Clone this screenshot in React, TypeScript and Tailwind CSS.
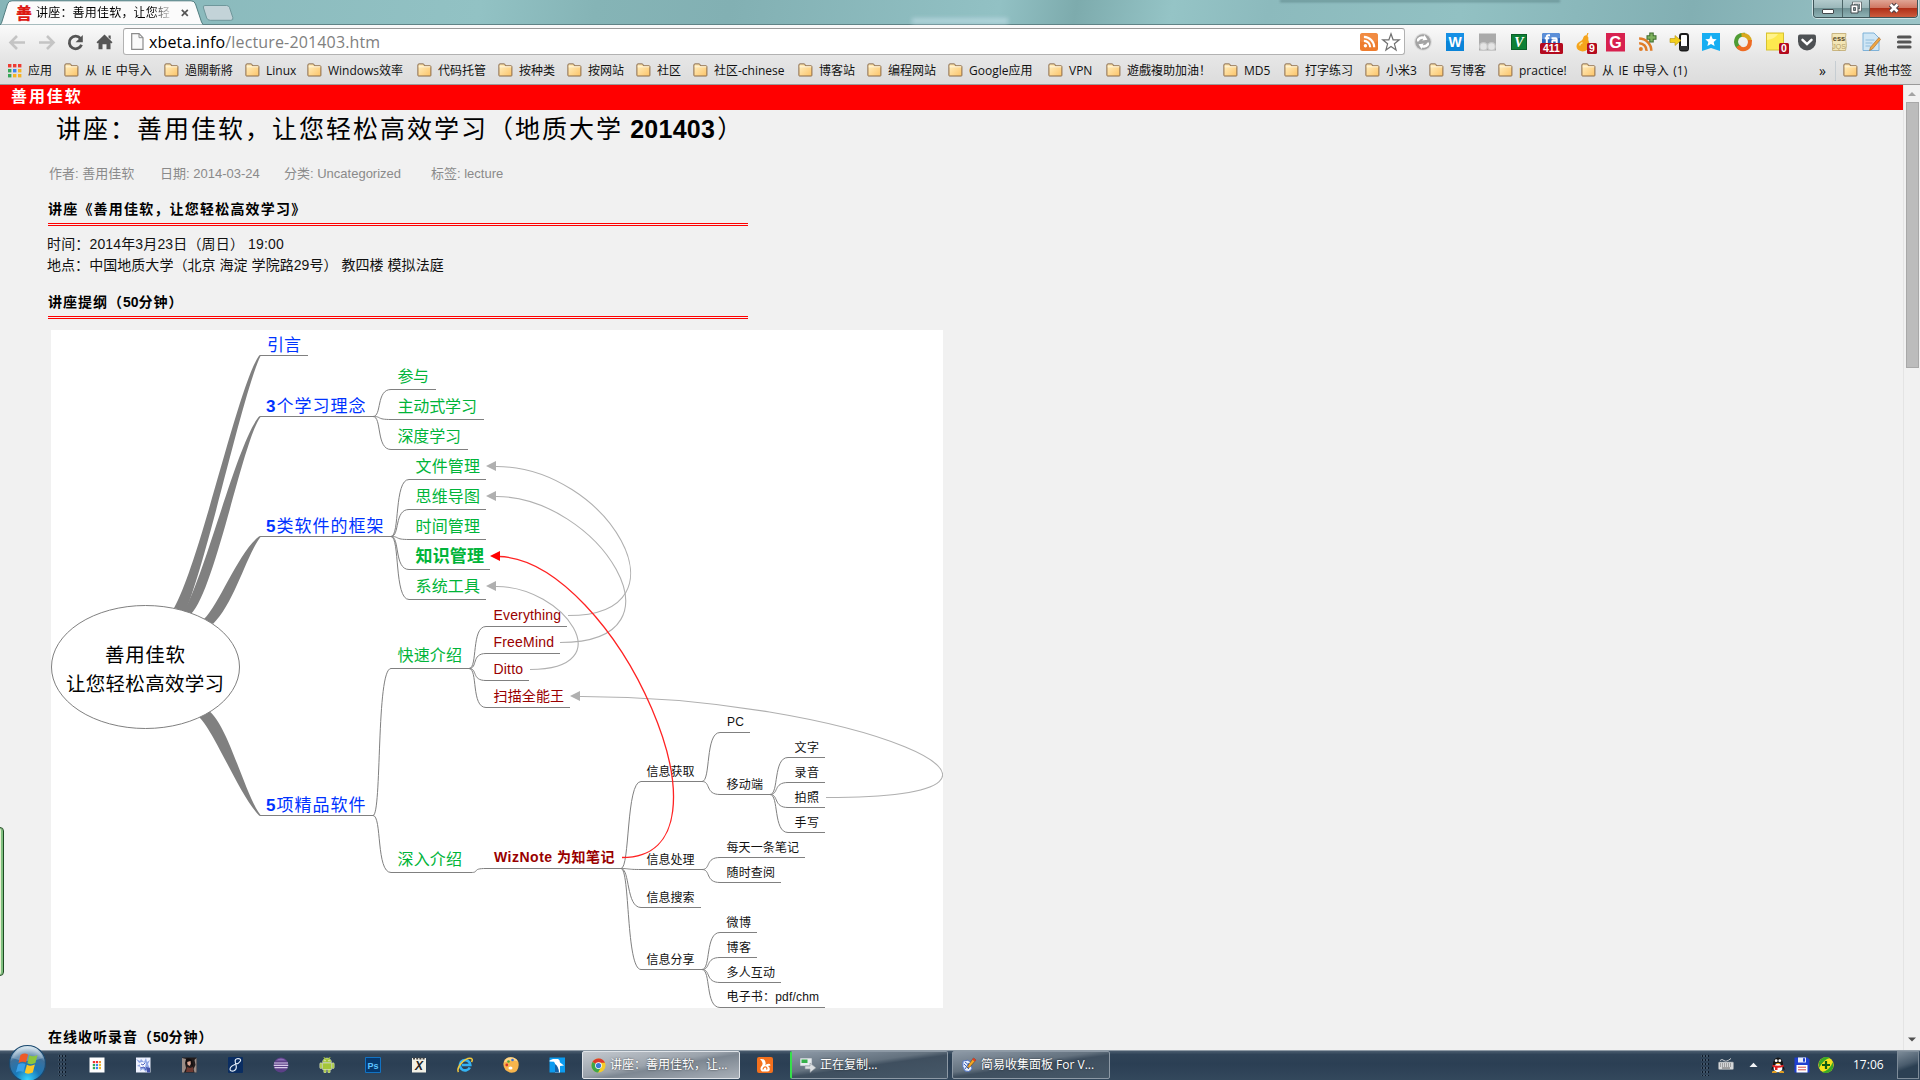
import React from "react";

const UI = "font-['Open_Sans','Noto_Sans_CJK_SC',sans-serif]";

/* ---------- small icons ---------- */

function Folder() {
  return (
    <svg className="h-4 w-4 shrink-0" viewBox="0 0 16 16">
      <defs>
        <linearGradient id="fold" x1="0" y1="0" x2="1" y2="1">
          <stop offset="0" stopColor="#fff0c4" />
          <stop offset="1" stopColor="#fcc468" />
        </linearGradient>
      </defs>
      <path d="M.9 12.400V2q0-1.100 1.100-1.100h4q1 0 1.200 1l.2.9H13q.9 0 .9.9v8.700q0 .6-.6.6H1.500q-.6 0-.6-.6z" fill="url(#fold)" stroke="#8a6a48" />
      <path d="M1.700 3.800h11.600" stroke="#fff6dc" />
    </svg>
  );
}

function Apps() {
  const c = ["#ee3b32", "#ee3b32", "#ee3b32", "#37a657", "#3c82f0", "#f5b324", "#37a657", "#f5b324", "#f5b324"];
  return (
    <svg className="h-[14px] w-[14px] shrink-0" viewBox="0 0 14 14">
      {c.map((f, i) => (
        <rect key={i} x={(i % 3) * 5} y={Math.floor(i / 3) * 5} width="3.4" height="3.4" fill={f} />
      ))}
    </svg>
  );
}

function Rss({ color = "#fff" }: { color?: string }) {
  return (
    <g fill="none" stroke={color} strokeWidth="2.2">
      <circle cx="5" cy="13.2" r="1.7" fill={color} stroke="none" />
      <path d="M3.5 8.2a6.3 6.3 0 0 1 6.3 6.5M3.5 4.2a10.4 10.4 0 0 1 10.3 10.5" />
    </g>
  );
}

const Badge = ({ x, w, t }: { x: number; w: number; t: string }) => (
  <g>
    <rect x={x} y="11" width={w} height="11" rx="1.5" fill="#b40a1e" />
    <text x={x + w / 2} y="20.3" fontSize="10.5" fontWeight="700" fill="#fff" textAnchor="middle" fontFamily="Liberation Sans">{t}</text>
  </g>
);

const extIcons: { c: number; g: React.ReactNode }[] = [
  { c: 1369, g: <g><rect x="1" y="1" width="18" height="18" rx="2.5" fill="#ee7d2f" /><rect x="1" y="1" width="18" height="9" rx="2.5" fill="#f39a55" opacity=".5" /><g transform="translate(1.4 .6)"><Rss /></g></g> },
  { c: 1391, g: <path d="M10 1.800l2.100 6h6.200l-4.900 4 1.700 6.200L10 14.400 4.900 18l1.700-6.200-4.900-4h6.200z" fill="#fff" stroke="#707070" strokeWidth="1.200" /> },
  { c: 1423, g: <g><circle cx="10" cy="10" r="9" fill="#dedede" /><circle cx="10" cy="10" r="7.800" fill="#a4a4a4" /><path d="M4 9.500V7q2.500-3.500 6.500-2.500l1-1.600 3 4.800-5.300.8 1-1.600Q7 6.500 5.500 9.500zM16 10.500V13q-2.500 3.500-6.500 2.500l-1 1.600-3-4.800 5.300-.8-1 1.600q3.200.4 4.700-2.600z" fill="#fff" /></g> },
  { c: 1455, g: <g><rect x="1" y="1" width="18" height="18" fill="#0a84d8" /><rect x="1" y="1" width="18" height="8" fill="#1e98ee" opacity=".6" /><text x="10" y="15" fontSize="14" fontWeight="700" fill="#fff" textAnchor="middle" fontFamily="Liberation Sans">W</text></g> },
  { c: 1488, g: <g><path d="M1 1.500h17v17H1z" fill="#aaa" /><circle cx="5.500" cy="14.500" r="4.500" fill="#c9c9c9" /><circle cx="13.500" cy="14.500" r="4.500" fill="#c9c9c9" /><circle cx="5.500" cy="14.500" r="3.200" fill="#e4e4e4" /><circle cx="13.500" cy="14.500" r="3.200" fill="#e4e4e4" /></g> },
  { c: 1519, g: <g><rect x="2.500" y="2.500" width="15" height="15" fill="#0d8035" stroke="#0a5e27" /><text x="10" y="15" fontSize="14" fontStyle="italic" fontWeight="700" fill="#fff" textAnchor="middle" fontFamily="Liberation Serif">V</text></g> },
  { c: 1551, g: <g><rect x="1" y="1" width="18" height="17" rx="2" fill="#2e63b8" /><path d="M1 3q0-2 2-2h14q2 0 2 2v3Q10 8 1 7z" fill="#5c8fd8" /><path d="M9 3.200H7.400Q5.800 3.200 5.800 5v6M3.800 6.200h4.400M10.500 6.200h4q1.200 0 1.200 1.300V11M15.700 8.600h-3.500q-1 0-1 1.200t1 1.200" fill="none" stroke="#fff" strokeWidth="2" /><Badge x={-1} w={23} t="411" /></g> },
  { c: 1585, g: <g><path d="M13.500 1l-1 3q1.300 1 .8 4 1.200 2 .7 5-.5 6-6.500 6.500Q1.500 18.500 1.500 14.500q0-3.500 3.500-5 2.500-1 3-3 .8-3.500 3.500-3.300l.8-2.200z" fill="#f5a41c" /><path d="M4.500 13.500q.5-2 3-3" stroke="#fde08a" strokeWidth="1.600" fill="none" /><Badge x={12} w={10} t="9" /></g> },
  { c: 1615, g: <g><rect x="1" y="1" width="19" height="18.500" fill="#d8214f" /><text x="10.500" y="16" fontSize="16" fontWeight="700" fill="#fff" textAnchor="middle" fontFamily="Liberation Sans">G</text></g> },
  { c: 1647, g: <g><g transform="translate(-2 1.500) scale(1.180)"><Rss color="#e07c28" /></g><path d="M14.500 .500v10M9.500 5.500h10" stroke="#3d6b2c" strokeWidth="4.500" /><path d="M14.500 1.500v8M10.500 5.500h8" stroke="#7db25e" strokeWidth="2.400" /></g> },
  { c: 1680, g: <g><rect x="10" y="2" width="8" height="16.500" rx="2" fill="#fff" stroke="#1a1a1a" strokeWidth="2" /><path d="M10 14v4h8v-4z" fill="#333" /><path d="M0 6.500h5V3.500l6 5-6 5v-3H0z" fill="#f2ce1b" stroke="#b59310" strokeWidth=".6" /></g> },
  { c: 1711, g: <g><path d="M1 1h18v18l-9-3-9 3z" fill="#17aef2" /><path d="M10 3l1.700 3.900 4 .4-3 2.700.9 4-3.600-2-3.600 2 .9-4-3-2.700 4-.4z" fill="#fff" /></g> },
  { c: 1743, g: <g fill="none" strokeWidth="4"><path d="M12 2.800Q3.500 2 3 10q.5 4 3.500 6" stroke="#4f9c34" /><path d="M8.500 3Q16 2.500 17 9.500" stroke="#d9a91e" /><path d="M17 8q.5 9-7 9.200-3.500-.2-5-3.200" stroke="#ee6c24" /></g> },
  { c: 1775, g: <g><rect x="1.500" y="1" width="17" height="17" fill="#fde94f" stroke="#d7c231" /><path d="M2 2h11q-3 5-11 6z" fill="#fff6a6" opacity=".7" /><Badge x={14} w={10} t="0" /></g> },
  { c: 1807, g: <g><path d="M1 4.500q0-2 2-2h14q2 0 2 2v5a9 9 0 0 1-18 0z" fill="#4e5154" /><path d="M5.500 7.800l4.500 4.300 4.500-4.300" stroke="#fff" strokeWidth="2.500" fill="none" strokeLinecap="round" /></g> },
  { c: 1839, g: <g><path d="M3 1.500h14q-1 4 0 8t-.500 9H3.500q.8-4 0-8t-.5-9z" fill="#f3e6b6" stroke="#c9b581" /><text x="10" y="9.300" fontSize="7.500" fontWeight="700" fill="#5b4a2a" textAnchor="middle" fontFamily="Liberation Sans">ess</text><text x="10" y="16.500" fontSize="7" fill="#b79f67" textAnchor="middle" fontFamily="Liberation Sans">JQS</text></g> },
  { c: 1871, g: <g><path d="M2 1h11l5 5v12.500H2z" fill="#cfe6f5" stroke="#7fb2d8" /><path d="M4.500 8h9M4.500 11h7M4.500 14h5" stroke="#8fbcdc" /><path d="M18 5.500l1.500 2-8 9.500-3 1.500 1-3.300z" fill="#f0a742" stroke="#a4672a" strokeWidth=".6" /></g> },
  { c: 1904, g: <path d="M4.500 5h11.500M4.500 10h11.500M4.500 15h11.500" stroke="#555" strokeWidth="3.200" strokeLinecap="round" /> },
];

/* ---------- browser chrome ---------- */

function TitleStrip() {
  return (
    <div className="relative flex h-[25px] shrink-0 items-start border-b border-[#5f8386] bg-[linear-gradient(100deg,#86b5b8_0%,#92c2c4_25%,#85b4b6_31%,#82b0b3_38%,#92c1c4_52%,#7dabad_56%,#95c4c6_61%,#8cbabd_66%,#92c1c3_76%,#82afb3_88%,#9cc5c8_100%)]">
      <svg className="h-[25px] w-[240px] shrink-0" viewBox="0 0 240 25">
        <path d="M0 25l1.500-2L7.500 4Q8.500.8 12 .8h179Q194.500.8 195.500 4l6 18 1.800 3z" fill="#fbfbfb" stroke="#527d80" strokeWidth="1" />
        <path d="M203.500 8q-1-2.500 1.500-2.500h21.500q2.300 0 3 2l3.300 10q.8 2.800-2 2.800h-20.500q-2.800 0-3.600-2.300z" fill="#c3d3d8" stroke="#6f979b" />
        <path d="M181.800 9.800l6 6m0-6l-6 6" stroke="#555" strokeWidth="1.700" />
      </svg>
      <div className="absolute left-4 top-[3px] w-[16px] text-[16px] leading-[18px] font-black text-[#dd1a14] font-['Noto_Sans_CJK_SC',sans-serif]">善</div>
      <div className={`absolute left-9 top-[4px] w-[138px] whitespace-nowrap text-[12px] leading-[18px] tracking-[0.200px] text-black [mask-image:linear-gradient(90deg,#000_84%,transparent)] ${UI}`}>讲座：善用佳软，让您轻</div>
      <div className="absolute left-[1280px] top-0 h-[3px] w-[280px] bg-[linear-gradient(180deg,#557d80,#557d8000)] blur-[1px]" />
      <div className="absolute left-[912px] top-[18px] h-[6px] w-[96px] bg-[#c5e0ea]/60 blur-[2px]" />
      <div className="absolute left-[1813px] top-0 flex h-[18px] w-[105px] overflow-hidden rounded-b-[4px] border border-t-0 border-[#3e5559] shadow-[0_0_0_1px_#cfe3e5]">
        <div className="flex w-[29px] items-end justify-center border-r border-[#4c6467] bg-[linear-gradient(180deg,#b3cbcd_0%,#9ab6b9_48%,#6f9194_50%,#8eb2b5_100%)] pb-[3px]">
          <div className="h-[5px] w-3 rounded-[1px] border border-[#43484c] bg-white" />
        </div>
        <div className="flex w-[27px] items-center justify-center border-r border-[#4c6467] bg-[linear-gradient(180deg,#b3cbcd_0%,#9ab6b9_48%,#6f9194_50%,#8eb2b5_100%)]">
          <svg className="mb-[2px]" width="14" height="13" viewBox="0 0 14 13"><path d="M4.500 2h7v7h-7z" fill="none" stroke="#43484c" strokeWidth="2.600" /><path d="M4.500 2h7v7h-7z" fill="none" stroke="#fff" strokeWidth="1.300" /><path d="M2 4h7v8H2z" fill="#fff" stroke="#43484c" /><path d="M4.500 6.500h2v3h-2z" fill="#7d989b" stroke="#43484c" strokeWidth=".8" /></svg>
        </div>
        <div className="flex flex-1 items-center justify-center bg-[linear-gradient(180deg,#e0a595_0%,#cf7560_48%,#b03018_50%,#cc5c3e_100%)]">
          <svg className="mb-[2px]" width="14" height="12" viewBox="0 0 14 12"><path d="M3.500 2.500l7 7m0-7l-7 7" stroke="#4c4146" strokeWidth="4.600" /><path d="M3.500 2.500l7 7m0-7l-7 7" stroke="#fff" strokeWidth="2.600" /></svg>
        </div>
      </div>
    </div>
  );
}

function Toolbar() {
  return (
    <div className={`relative flex h-8 shrink-0 items-center bg-[linear-gradient(180deg,#fafafa,#e6e6e6)] ${UI}`}>
      <svg className="h-8 w-[123px] shrink-0" viewBox="0 25 123 32">
        <g fill="none" stroke="#c4c4c4" strokeWidth="2.600">
          <path d="M25 42.500H11M17 36l-6.500 6.500L17 49" />
          <path d="M39 42.500h14M47 36l6.500 6.500L47 49" />
        </g>
        <path d="M80.500 38.500a6.300 6.300 0 1 0 1 6.200" fill="none" stroke="#555" strokeWidth="2.800" />
        <path d="M82.800 35v7.200h-7.200z" fill="#555" />
        <path d="M104.500 34.500l8 7.800-1.200 1.200-.8-.7v6.500h-4v-5h-4v5h-4v-6.500l-.8.7-1.200-1.200zM108.500 35.500h2.200v4l-2.200-2z" fill="#555" />
      </svg>
      <div className="mt-px flex h-[27px] w-[1282px] items-center rounded-[3px] border border-[#b2b2b2] border-t-[#999] bg-white pl-[7px]">
        <svg className="h-[19px] w-[13px]" viewBox="0 0 13 19"><path d="M.7 1.700h7.300l4 4v11.600H.7z" fill="#fafafa" stroke="#8c8c8c" strokeWidth="1.200" /><path d="M8 1.700v4h4" fill="none" stroke="#8c8c8c" /></svg>
        <div className="ml-[5px] whitespace-nowrap text-[16px] leading-6 tracking-[0.150px] text-black">xbeta.info<span className="text-[#808080]">/lecture-201403.htm</span></div>
      </div>
      {extIcons.map(({ c, g }) => (
        <svg key={c} className="absolute top-[7px] h-5 w-5 overflow-visible" style={{ left: c - 10 }} viewBox="0 0 20 20">{g}</svg>
      ))}
    </div>
  );
}

const marks: [string, number, number][] = [
  ["从 IE 中导入", 64, 164], ["過關斬將", 164, 245], ["Linux", 245, 307], ["Windows效率", 307, 417], ["代码托管", 417, 498],
  ["按种类", 498, 567], ["按网站", 567, 636], ["社区", 636, 693], ["社区-chinese", 693, 798], ["博客站", 798, 867],
  ["编程网站", 867, 948], ["Google应用", 948, 1048], ["VPN", 1048, 1106], ["遊戲複助加油！", 1106, 1223], ["MD5", 1223, 1284],
  ["打字练习", 1284, 1365], ["小米3", 1365, 1429], ["写博客", 1429, 1498], ["practice!", 1498, 1581], ["从 IE 中导入 (1)", 1581, 1819],
];

function Bookmarks() {
  return (
    <div className={`flex h-7 shrink-0 items-center border-b border-[#9a9a9a] bg-[linear-gradient(180deg,#e6e6e6,#dcdcdc)] pl-2 text-[12px] leading-[18px] text-[#111] [word-spacing:1.300px] ${UI}`}>
      <div className="flex w-14 shrink-0 items-center gap-[6px] whitespace-nowrap"><Apps />应用</div>
      {marks.map(([t, a, b]) => (
        <div key={a} className="flex shrink-0 items-center gap-[5px] whitespace-nowrap" style={{ width: b - a }}>
          <Folder />
          <span>{t}</span>
        </div>
      ))}
      <div className="w-[16px] text-[14px]">»</div>
      <div className="mr-[7px] h-5 w-px bg-[#c6cdd2]" />
      <div className="flex items-center gap-[5px] whitespace-nowrap"><Folder />其他书签</div>
    </div>
  );
}

/* ---------- mind map ---------- */

type Node = { t: string; x: number; r: number; cy: number; s: number; f: string; b?: boolean; latin?: boolean; line?: [number, number, number] };
const BL = "#0033ff", GR = "#00b439", RD = "#990000", BK = "#111111";

const nodes: Node[] = [
  { t: "善用佳软", x: 105, r: 185, cy: 655, s: 19.5, f: "#000" },
  { t: "让您轻松高效学习", x: 66, r: 224, cy: 684, s: 19.5, f: "#000" },
  { t: "引言", x: 267, r: 301, cy: 345, s: 17, f: BL, line: [260, 308, 355.5] },
  { t: "3个学习理念", x: 266, r: 365.5, cy: 406, s: 17, f: BL, line: [260, 374, 416.5] },
  { t: "5类软件的框架", x: 266, r: 383.5, cy: 526, s: 17, f: BL, line: [260, 392, 536.5] },
  { t: "5项精品软件", x: 266, r: 365.5, cy: 805, s: 17, f: BL, line: [260, 373, 815.5] },
  { t: "参与", x: 397.5, r: 429, cy: 376, s: 16, f: GR, line: [391, 436, 389.5] },
  { t: "主动式学习", x: 397.5, r: 477, cy: 406, s: 16, f: GR, line: [391, 484, 419.5] },
  { t: "深度学习", x: 397.5, r: 461, cy: 436, s: 16, f: GR, line: [391, 468, 449.5] },
  { t: "文件管理", x: 415.5, r: 480, cy: 466, s: 16, f: GR, line: [409, 486, 479.5] },
  { t: "思维导图", x: 415.5, r: 480, cy: 496, s: 16, f: GR, line: [409, 486, 509.5] },
  { t: "时间管理", x: 415.5, r: 480, cy: 526, s: 16, f: GR, line: [409, 486, 539.5] },
  { t: "知识管理", x: 415.5, r: 484, cy: 556, s: 17, f: GR, b: true, line: [409, 490, 569.5] },
  { t: "系统工具", x: 415.5, r: 480, cy: 586, s: 16, f: GR, line: [409, 486, 599.5] },
  { t: "快速介绍", x: 397.5, r: 462, cy: 655, s: 16, f: GR, line: [391, 470, 668.5] },
  { t: "深入介绍", x: 397.5, r: 462, cy: 859, s: 16, f: GR, line: [391, 472, 872.5] },
  { t: "Everything", x: 493.5, r: 561, cy: 615, s: 14, f: RD, latin: true, line: [486, 567, 626.5] },
  { t: "FreeMind", x: 493.5, r: 554, cy: 642, s: 14, f: RD, latin: true, line: [486, 560, 653.5] },
  { t: "Ditto", x: 493.5, r: 523, cy: 669, s: 14, f: RD, latin: true, line: [486, 529, 680.5] },
  { t: "扫描全能王", x: 493.5, r: 564, cy: 696, s: 14, f: RD, line: [486, 570, 707.5] },
  { t: "WizNote 为知笔记", x: 494, r: 614.5, cy: 857, s: 14, f: RD, b: true, line: [486, 622, 868.5] },
  { t: "信息获取", x: 646.5, r: 694.5, cy: 771, s: 12, f: BK, line: [641, 703, 781.5] },
  { t: "信息处理", x: 646.5, r: 694.5, cy: 859, s: 12, f: BK, line: [641, 703, 869.5] },
  { t: "信息搜索", x: 646.5, r: 694.5, cy: 897, s: 12, f: BK, line: [641, 701, 907.5] },
  { t: "信息分享", x: 646.5, r: 694.5, cy: 959, s: 12, f: BK, line: [641, 703, 969.5] },
  { t: "PC", x: 727, r: 744, cy: 721.5, s: 12, f: BK, latin: true, line: [720, 750, 732.5] },
  { t: "移动端", x: 726.5, r: 763, cy: 784, s: 12, f: BK, line: [720, 770, 794.5] },
  { t: "文字", x: 794.5, r: 819, cy: 747, s: 12, f: BK, line: [788, 825, 757.5] },
  { t: "录音", x: 794.5, r: 819, cy: 772, s: 12, f: BK, line: [788, 825, 782.5] },
  { t: "拍照", x: 794.5, r: 819, cy: 797, s: 12, f: BK, line: [788, 825, 807.5] },
  { t: "手写", x: 794.5, r: 819, cy: 822, s: 12, f: BK, line: [788, 825, 832.5] },
  { t: "每天一条笔记", x: 726.5, r: 799, cy: 847, s: 12, f: BK, line: [720, 805, 857.5] },
  { t: "随时查阅", x: 726.5, r: 775, cy: 872, s: 12, f: BK, line: [720, 781, 882.5] },
  { t: "微博", x: 726.5, r: 751, cy: 922, s: 12, f: BK, line: [720, 757, 932.5] },
  { t: "博客", x: 726.5, r: 751, cy: 947, s: 12, f: BK, line: [720, 757, 957.5] },
  { t: "多人互动", x: 726.5, r: 775, cy: 972, s: 12, f: BK, line: [720, 781, 982.5] },
  { t: "电子书：pdf/chm", x: 726.5, r: 819, cy: 996.5, s: 12, f: BK, line: [720, 825, 1007.5] },
];

/* parent x, parent y, child x, child y's */
const links: [number, number, number, number[]][] = [
  [373, 416.5, 391, [389.5, 419.5, 449.5]],
  [391, 536.5, 409, [479.5, 509.5, 539.5, 569.5, 599.5]],
  [373, 815.5, 391, [668.5, 872.5]],
  [469, 668.5, 486, [626.5, 653.5, 680.5, 707.5]],
  [471, 872.5, 486, [868.5]],
  [621, 868.5, 641, [781.5, 869.5, 907.5, 969.5]],
  [702, 781.5, 720, [732.5, 794.5]],
  [770, 794.5, 788, [757.5, 782.5, 807.5, 832.5]],
  [702, 869.5, 720, [857.5, 882.5]],
  [702, 969.5, 720, [932.5, 957.5, 982.5, 1007.5]],
];

function MindMap() {
  return (
    <svg className="ml-[51px] mt-[11px] block h-[678px] w-[892px] bg-white" viewBox="51 330 892 678">
      <g fill="#808080">
        <path d="M174 608C201 560 238 385 259.500 355L260.500 356C243 392 206 565 185 612z" />
        <path d="M184 611C206 572 238 440 259.500 416L260.500 417C243 440 215 590 191 614z" />
        <path d="M204 619C219 605 239 551 259.500 536L260.500 537C247 554 234 604 213 624z" />
        <path d="M198 716C214 730 239 795 259.500 816L260.500 815C245 795 228 725 209 711z" />
      </g>
      <ellipse cx="145.500" cy="667" rx="94" ry="61.500" fill="#fff" stroke="#808080" />
      <g fill="none" stroke="#808080">
        {nodes.map((n, i) => n.line && <path key={i} d={`M${n.line[0]} ${n.line[2]}H${n.line[1]}`} />)}
        {links.map(([px, py, cx, ys]) =>
          ys.map((y) => <path key={`${px}-${y}`} d={`M${px} ${py}C${px + 9} ${py} ${cx - 15} ${y} ${cx} ${y}`} />)
        )}
      </g>
      {nodes.map((n, i) => (
        <text key={i} x={n.x} y={n.cy + n.s * (n.latin ? 0.35 : 0.38)} fontSize={n.s} fill={n.f} fontWeight={n.b ? 700 : 400} textLength={n.r - n.x} className="font-['Liberation_Sans','Noto_Sans_CJK_SC',sans-serif]">
          {/^[35]/.test(n.t) ? <><tspan fontWeight="700">{n.t[0]}</tspan>{n.t.slice(1)}</> : n.t}
        </text>
      ))}
      <g fill="none" stroke="#b0b0b0" strokeWidth="1.100">
        <path d="M568 615.500C695 615.500 607 466 496 466.500" />
        <path d="M560 642.500C694 642.500 597 496 496 496.500" />
        <path d="M530 669.500C623 669.500 564 586 496 586.500" />
        <path d="M826 797.500C1096 797.500 848 696 580 696.500" />
        <path d="M622 857.500C749 857.500 615 560 499 556.500" stroke="#f22" strokeWidth="1.300" />
      </g>
      <g fill="#b0b0b0">
        <path d="M486 466l10-5v10z" />
        <path d="M486 496l10-5v10z" />
        <path d="M486 586l10-5v10z" />
        <path d="M570 696l10-5v10z" />
        <path d="M490 556l10-5v10z" fill="#f00" />
      </g>
    </svg>
  );
}

/* ---------- page ---------- */

const Rule = () => <div className="ml-12 h-[3px] w-[700px] border-y border-[#f00]" />;

function Page() {
  return (
    <div className="relative h-[965px] min-w-0 flex-1 overflow-hidden bg-[#f1f1f1] font-['Liberation_Sans','Noto_Sans_CJK_SC',sans-serif] whitespace-nowrap">
      <div className="flex h-[25px] items-center bg-[#f00] pb-px pl-[11px] text-[16px] leading-[24px] font-bold tracking-[1.900px] text-white">善用佳软</div>
      <h1 className="ml-[56px] h-[38px] text-[25px] leading-[38px] font-normal tracking-[2px] text-black">讲座：善用佳软，让您轻松高效学习（地质大学<span className="text-[25px] font-bold tracking-[0.250px]"> 201403</span><span className="ml-[2px]">）</span></h1>
      <div className="mt-[17px] flex h-[18px] text-[13px] leading-[18px] text-[#8a8a8a]">
        <div className="ml-[49px] w-[111px]">作者: 善用佳软</div>
        <div className="w-[124px]">日期: 2014-03-24</div>
        <div className="w-[147px]">分类: Uncategorized</div>
        <div>标签: lecture</div>
      </div>
      <h2 className="ml-12 mt-[16px] h-[22px] text-[14px] leading-[20px] font-bold tracking-[1.200px] text-black">讲座《善用佳软，让您轻松高效学习》</h2>
      <div className="h-[2px]" />
      <Rule />
      <div className="ml-[47px] mt-[8px] h-[41px] text-[14px] leading-[21px] text-[#111]">
        <div className="tracking-[0.150px]">时间：2014年3月23日（周日） 19:00</div>
        <div className="tracking-[0.050px]">地点：中国地质大学（北京 海淀 学院路29号） 教四楼 模拟法庭</div>
      </div>
      <h2 className="ml-12 mt-[17px] h-[24px] text-[14px] leading-[20px] font-bold tracking-[1px] text-black">讲座提纲（<span className="tracking-normal">50</span>分钟）</h2>
      <Rule />
      <MindMap />
      <h2 className="ml-12 mt-[19px] text-[14px] leading-[20px] font-bold tracking-[1px] text-black">在线收听录音（<span className="tracking-normal">50</span>分钟）</h2>
      <div className="absolute left-[-6px] top-[742px] h-[149px] w-[10px] rounded-[4px] border border-[#1d4a22] bg-[#e9efd3] shadow-[inset_-2px_0_0_#7fbf7f]" />
    </div>
  );
}

function Scrollbar() {
  return (
    <div className="flex w-[17px] shrink-0 flex-col items-center border-l border-[#e4e4e4] bg-[#f1f1f1]">
      <svg className="h-[17px] w-4 shrink-0" viewBox="0 0 16 17"><path d="M4 11l4-4 4 4z" fill="#a3a3a3" /></svg>
      <div className="h-[266px] w-[13px] shrink-0 border border-[#a8a8a8] bg-[#bcbcbc]" />
      <div className="flex-1" />
      <svg className="mb-[2px] h-[17px] w-4 shrink-0" viewBox="0 0 16 17"><path d="M4 6.500l4 4 4-4z" fill="#505050" /></svg>
    </div>
  );
}

/* ---------- taskbar ---------- */

const ChromeLogo = () => (
  <svg className="h-[15px] w-[15px] shrink-0" viewBox="0 0 16 16">
    <circle cx="8" cy="8" r="7.500" fill="#f5cc2a" />
    <path d="M8 8L1.500 4.300A7.500 7.500 0 0 1 14.900 5H8z" fill="#dc3a2b" />
    <path d="M8 8L1.500 4.300A7.500 7.500 0 0 0 7.500 15.500L11 9.500z" fill="#3fa648" />
    <circle cx="8" cy="8" r="3.600" fill="#fff" />
    <circle cx="8" cy="8" r="2.800" fill="#3b79d6" />
  </svg>
);

const quick: React.ReactNode[] = [
  <g><rect x=".500" y=".500" width="15" height="15" fill="#fff" />{["#e33", "#e33", "#e93", "#3a5", "#38e", "#eb3", "#3a5", "#38e", "#eb3"].map((f, i) => <rect key={i} x={3.800 + (i % 3) * 3} y={4 + Math.floor(i / 3) * 3} width="2.200" height="2.200" fill={f} />)}</g>,
  <g><rect x="1" y=".500" width="14.500" height="15" fill="#eef2ff" /><path d="M1 2l4 2 1-2 3 3 2-4 1 4 3-2-2 4 2 5-3-1-1 4-3-3-3 2 1-4-4-1 3-2z" fill="#8fa6e4" /><path d="M4 6l3-1 4 1-1 4-4 1z" fill="#f6f8ff" /><path d="M6 7l2 1 2-2M5 11l4-1 2 3" stroke="#3d52b4" fill="none" strokeWidth=".9" /><path d="M11 10l4 1v4.500h-3z" fill="#4252a8" /></g>,
  <g><rect x="1" y=".500" width="14.500" height="15" fill="#221c1d" /><path d="M1 1l4 1-1 4 1 5-2 4.500H1zM15.500 1l-2 2 1 5-2 4 1 3.500h2z" fill="#9b8d87" /><path d="M6 3q2-1.500 4 0l.5 3-2 3-2-1.500z" fill="#dba795" /><path d="M5 2q3-2 6 1l1 6-2-1-.5-4L6 5 5 9z" fill="#120d0e" /><path d="M6 10l3 1 3-1 .5 5H5z" fill="#6d3a33" /></g>,
  <g><rect x="1" y="0" width="15" height="16" rx="1" fill="#0a2d62" /><path d="M13.500 4Q14 1.500 11 1.500 7.500 2 8.300 5.200 9 7.500 9.300 9.500 9.500 13 6.500 14 3 14.500 3 12 3.500 9 8 7.500 12 6.500 13.500 4" fill="none" stroke="#e6effa" strokeWidth="1.200" /></g>,
  <g><circle cx="8" cy="8" r="7.400" fill="#5b3f86" /><path d="M3 3.500Q8-.500 13 3.500z" fill="#8a6cb5" /><path d="M1 6h14M.8 8.300h14.400M1.500 10.700h13" stroke="#d8cbe9" strokeWidth="1.200" /></g>,
  <g><g fill="#a4c639" stroke="#f2f7df" strokeWidth=".5"><rect x=".800" y="5.800" width="2.300" height="5.800" rx="1.100" /><rect x="12.900" y="5.800" width="2.300" height="5.800" rx="1.100" /><rect x="4.800" y="11" width="2.400" height="5" rx="1.100" /><rect x="8.800" y="11" width="2.400" height="5" rx="1.100" /><path d="M3.500 5.500a4.500 4.500 0 0 1 9 0zM3.500 6h9v6.500h-9z" /></g><path d="M4.800 0l1.400 2M11.200 0L9.800 2" stroke="#a4c639" /><circle cx="6" cy="3.700" r=".6" fill="#fff" /><circle cx="10" cy="3.700" r=".6" fill="#fff" /></g>,
  <g><rect x="0" y="0" width="16" height="16" rx="1" fill="#1273c4" /><rect x="1" y="1" width="14" height="14" fill="#06396f" /><text x="8" y="11.500" fontSize="9" fontWeight="700" fill="#5cc3ff" textAnchor="middle" fontFamily="Liberation Sans">Ps</text></g>,
  <g><rect x="1" y="1" width="14" height="14.500" fill="#f2f0e6" /><path d="M2 1.500h12" stroke="#444" strokeDasharray="2 1.200" strokeWidth="2" /><text x="8" y="13" fontSize="12" fontWeight="700" fontStyle="italic" fill="#222" textAnchor="middle" fontFamily="Liberation Sans">X</text></g>,
  <g><path d="M12.800 10.500A5.200 5.200 0 1 1 13.300 8H5" fill="none" stroke="#35b3f2" strokeWidth="2.700" /><path d="M1.500 15Q-.5 12 4 6.500 10 0 14.500 1.500 16 2.500 14.500 5" fill="none" stroke="#f3c93c" strokeWidth="1.500" /></g>,
  <g><path d="M7.500.3q8 .3 8.200 7.500-.2 7.800-7 8-7.800-1-8.400-8.800Q1 .5 7.500.3z" fill="#f8b54c" /><path d="M7.500.3Q13 .5 15 4.500 9 2 1 5.500 2.500.5 7.500.3z" fill="#fdd68c" /><circle cx="3.800" cy="8" r="1.400" fill="#d8352a" /><circle cx="5.500" cy="4.500" r="1.300" fill="#49a53a" /><circle cx="9.500" cy="3" r="1.300" fill="#3a6fd0" /><ellipse cx="7.500" cy="11" rx="2" ry="1.500" fill="#fff" /></g>,
  <g><rect x=".500" y=".500" width="15.500" height="15" fill="#0b9bf0" /><path d="M.5 3.500L4 2h5q2 .5 2 3.500l4 3-4 .5v6.500H6V6.500L5 4.800.5 4.500z" fill="#fff" /><path d="M6 7v8.500h4Q9.500 9 6 7z" fill="#1663a8" /></g>,
];

function TaskButton({ icon, label, active, edge }: { icon: React.ReactNode; label: string; active?: boolean; edge?: boolean }) {
  return (
    <div className={`flex h-[28px] w-[158px] items-center gap-[4px] rounded-[2px] border pl-[8px] text-white ${active ? "border-[#dfe3e8] bg-[linear-gradient(170deg,#c4c9cf_0%,#9ba3ac_45%,#7d8792_55%,#a9b0b8_100%)]" : "border-[#8d99a5] bg-[linear-gradient(172deg,#8d99a6_0%,#64727f_42%,#3f4f5f_52%,#465868_100%)]"} ${edge ? "border-l-2 border-l-[#35e04a] pl-[6px]" : ""}`}>
      {icon}
      <span className="whitespace-nowrap text-[12px] leading-[18px] [text-shadow:0_0_2px_#000a]">{label}</span>
    </div>
  );
}

const Grip = () => <div className="h-[22px] w-2 shrink-0 bg-[radial-gradient(circle,#0d1826_0.9px,#6d7f8f55_1.100px,transparent_1.500px)] bg-[length:3px_4px]" />;

function Taskbar() {
  return (
    <div className={`relative flex h-[30px] shrink-0 items-center border-t border-[#8f9ba6] bg-[linear-gradient(180deg,#4b5d6f_0%,#2f4357_12%,#2b3f54_45%,#33485c_100%)] pb-px pl-[58px] ${UI}`}>
      <svg className="absolute left-2 top-[-7px] z-10 h-[38px] w-[40px]" viewBox="0 0 40 38">
        <defs>
          <radialGradient id="orb" cx=".5" cy=".95" r=".9">
            <stop offset="0" stopColor="#35d4ff" />
            <stop offset=".4" stopColor="#1a78b8" />
            <stop offset=".75" stopColor="#3d6f9a" />
            <stop offset="1" stopColor="#cfe0ea" />
          </radialGradient>
        </defs>
        <circle cx="19.500" cy="19.500" r="18" fill="url(#orb)" stroke="#1c4a70" strokeWidth="1.200" />
        <path d="M4 14A16.500 16.500 0 0 1 35 14Q20 20 4 14z" fill="#fff" opacity=".25" />
        <path d="M12.500 11q4-2.500 7.500-.5l-2 8q-3.500-1.800-7.500.4z" fill="#ee5a28" />
        <path d="M21.300 11.300q3.700 2 8.200-.3l-2.100 8q-4.300 2.200-8 .2z" fill="#8cc63e" />
        <path d="M10 20.500q4-2.200 7.500-.4l-2.100 8q-3.400-1.900-7.500.4z" fill="#3aa0e8" />
        <path d="M18.900 20.700q3.700 2 8-.2l-2.100 8q-4.200 2.200-8 .2z" fill="#fdc726" />
      </svg>
      <Grip />
      <div className="ml-[23px] flex w-[493px] items-center gap-[30px]">
        {quick.map((g, i) => <svg key={i} className="h-4 w-4 shrink-0" viewBox="0 0 16 16">{g}</svg>)}
      </div>
      <TaskButton active icon={<ChromeLogo />} label="讲座：善用佳软，让..." />
      <svg className="ml-[17px] h-4 w-4" viewBox="0 0 16 16"><rect width="16" height="16" rx="2" fill="#f3701d" /><path d="M3 2q5-.5 5.500 3.500Q9 7 8 8.500q2-2.500 5-1.500l.5 1.500-2.500.5q2.500 1.500 1.500 4.500-.5 1-2 1H5Q2.500 12.500 4 10q2-2 1.500-4Q5 4 3 2z" fill="#fff" /><path d="M6 12.500q.5-3 3-2.500 1.500.8.5 2.500" fill="none" stroke="#f3701d" strokeWidth="1.200" /></svg>
      <div className="w-[17px]" />
      <TaskButton edge icon={<svg className="h-4 w-4 shrink-0" viewBox="0 0 16 16"><rect x="0" y="1" width="12" height="8" fill="#e8ecef" stroke="#7d8a94" strokeWidth=".6" /><rect x="1.500" y="2.500" width="6" height="3.500" fill="#35b04a" /><path d="M5 9h5V6l6 4.800-6 4.700V12H5z" fill="#dcdfe2" stroke="#8b949b" strokeWidth=".6" /></svg>} label="正在复制..." />
      <div className="w-1" />
      <TaskButton icon={<svg className="h-4 w-4 shrink-0" viewBox="0 0 16 16"><path d="M2 4q5-2 8 1l1 7q-3 4-7 2Q.500 10 2 4z" fill="#e6eefc" stroke="#4c6fc0" /><path d="M3 7l5 5M4 5l5 4M4 12l4-6" stroke="#3d62bb" /><path d="M12.500 1l2.500 2-6 7-2.500 1 .8-3z" fill="#f5a623" stroke="#4a3010" strokeWidth=".5" /><path d="M12.500 1l2.500 2-1.500 1.600-2.300-2z" fill="#e03a2a" /></svg>} label="简易收集面板 For V..." />
      <div className="flex-1" />
      <Grip />
      <svg className="mb-[2px] ml-[9px] h-4 w-4" viewBox="0 0 16 16"><path d="M2 4.500q2-2 4 0t7-2" stroke="#c9cdd1" fill="none" /><rect x=".500" y="6" width="15" height="7.500" rx="1" fill="#d5d7d9" stroke="#8a9299" strokeWidth=".6" /><path d="M2 8h12M2 10h12" stroke="#666" strokeDasharray="1 1" /><path d="M4 12h8" stroke="#666" /></svg>
      <svg className="ml-[15px] h-2 w-[9px]" viewBox="0 0 9 8"><path d="M.500 6l4-4.300 4 4.300z" fill="#f2f4f6" /></svg>
      <svg className="ml-[12px] h-4 w-4" viewBox="0 0 16 16"><ellipse cx="8" cy="7" rx="5" ry="6.500" fill="#151515" /><path d="M3 9q-2 2-1.500 4l2-1zM13 9q2 2 1.500 4l-2-1z" fill="#151515" /><ellipse cx="8" cy="11" rx="4.300" ry="4.300" fill="#fff" /><circle cx="6.200" cy="3.700" r="1.400" fill="#fff" /><circle cx="9.800" cy="3.700" r="1.400" fill="#fff" /><path d="M5 6h6l-3 1.300z" fill="#f6a81c" /><path d="M2.500 7.700q5.500 2 11 0v2q-3 1.200-6 1V13H5v-2.600L2.500 9.700z" fill="#e11f1f" /><path d="M2 15.300q2-2 4.500 0zM9.500 15.300q2-2 4.500 0z" fill="#f6a81c" stroke="#f6a81c" /></svg>
      <svg className="ml-[8px] h-4 w-4" viewBox="0 0 16 16"><path d="M.500.500h13l2 2v13H.500z" fill="#1f3fd0" /><rect x="4" y=".500" width="8" height="5" fill="#e7ecf8" /><rect x="9" y="1.200" width="2" height="3.500" fill="#1f3fd0" /><rect x="2.500" y="8" width="11" height="7.500" fill="#fff" /><path d="M4 10.200h8M4 12.800h8" stroke="#d04a4a" /></svg>
      <svg className="ml-[8px] h-4 w-4" viewBox="0 0 16 16"><circle cx="8" cy="8" r="7.700" fill="#f4e31d" /><path d="M1 5a7.700 7.700 0 0 1 11-4Q6 2 1 11zM15 11a7.700 7.700 0 0 1-11 4q7-1 11-10z" fill="#3aa828" /><path d="M8 4v8M4 8h8" stroke="#0e5c12" strokeWidth="2.200" /></svg>
      <div className="ml-[19px] w-[44px] whitespace-nowrap text-[12px] leading-[18px] text-white">17:06</div>
      <div className="mr-px h-[28px] w-[22px] border border-[#7e8c99] bg-[linear-gradient(160deg,#7c8b98_0%,#4a5c6d_45%,#2c4053_60%)]" />
    </div>
  );
}

export default function App() {
  return (
    <div className="flex h-[1080px] w-[1920px] flex-col overflow-hidden bg-[#f1f1f1]">
      <TitleStrip />
      <Toolbar />
      <Bookmarks />
      <div className="flex min-h-0 flex-1">
        <Page />
        <Scrollbar />
      </div>
      <Taskbar />
    </div>
  );
}
